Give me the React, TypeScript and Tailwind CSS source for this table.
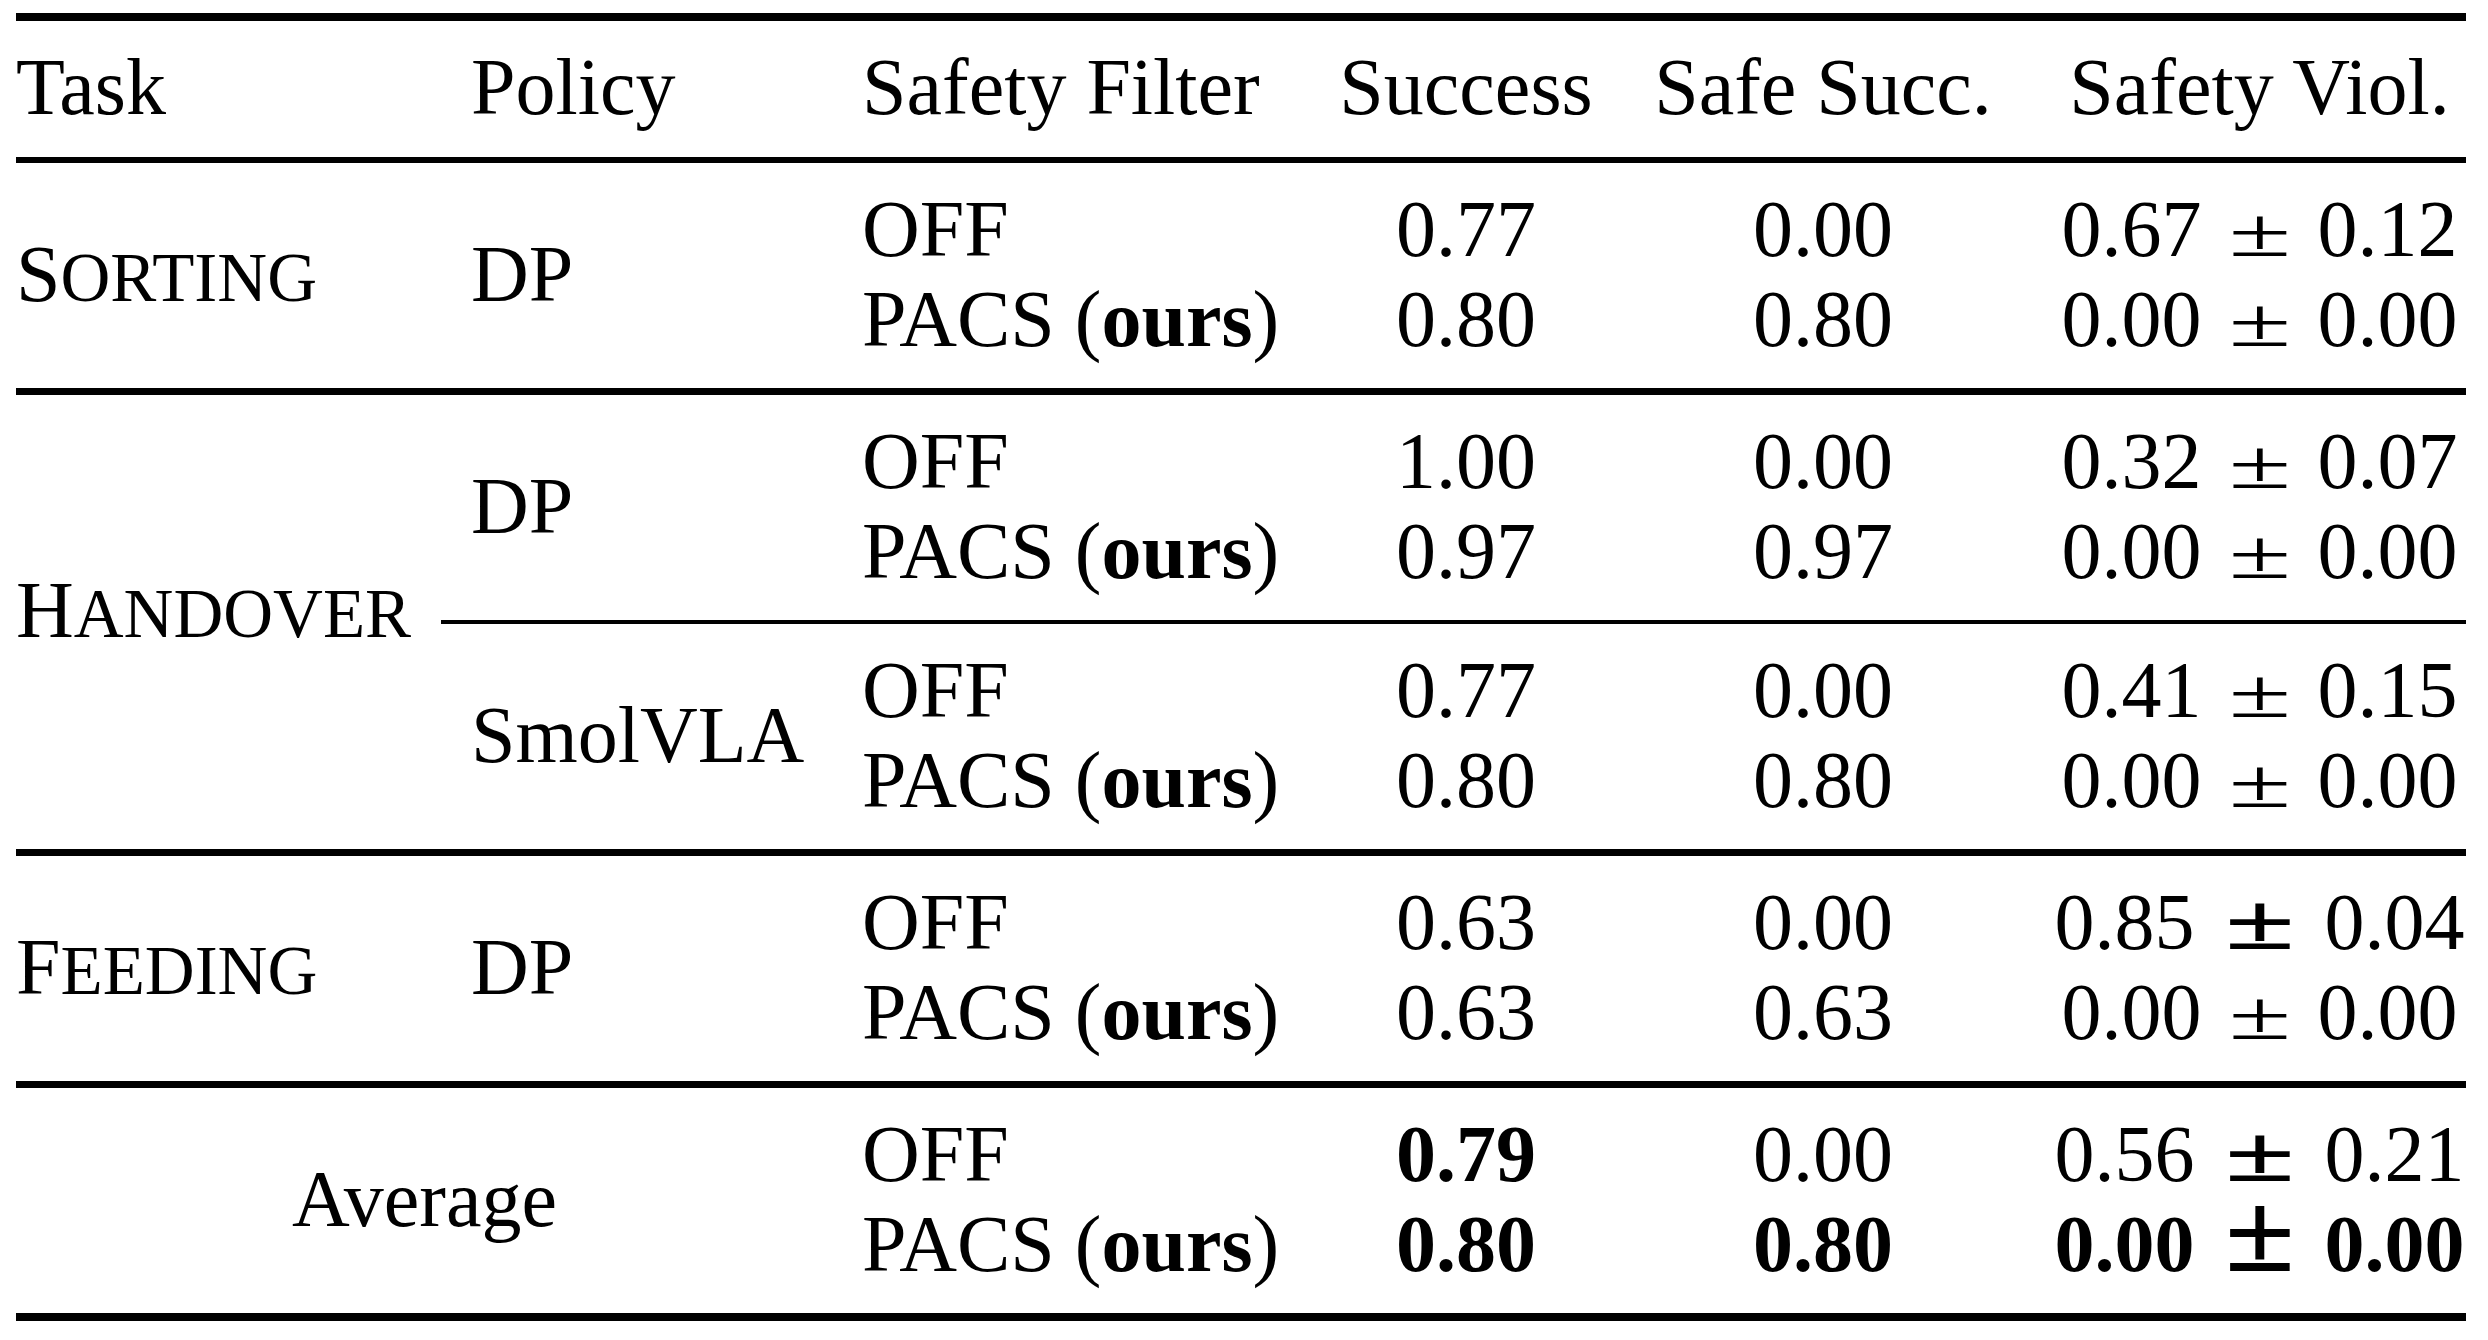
import React from "react";

const COLS = "grid grid-cols-[455px_391px_477px_254px_460px_413px] grid-rows-[90px_90px] pt-[21px] pb-[24px]";
const SUBCOLS = "grid grid-cols-[391px_477px_254px_460px_413px] grid-rows-[90px_90px] pl-[30px] pt-[21px] pb-[24px]";

function SC({ t }: { t: string }) {
  return (
    <span className="whitespace-nowrap">
      {t[0]}
      <span className="text-[69px] leading-none">{t.slice(1).toUpperCase()}</span>
    </span>
  );
}

function Pacs() {
  return (
    <span className="whitespace-nowrap">
      PACS (<span className="font-bold">ours</span>)
    </span>
  );
}

type Kind = "light" | "heavy" | "bold";

function PM({ a, b, k = "light" }: { a: string; b: string; k?: Kind }) {
  let pm: React.ReactNode;
  if (k === "bold") {
    pm = (
      <span className="mx-[43px] inline-block origin-[50%_72px] scale-x-[1.6] scale-y-[1.43] font-bold leading-[90px]">±</span>
    );
  } else if (k === "heavy") {
    pm = (
      <span className="mx-[43px] inline-block origin-[50%_72px] scale-x-[1.6] scale-y-[1.0] font-bold leading-[90px]">±</span>
    );
  } else {
    pm = (
      <span className="mx-[36px] inline-block origin-[50%_72px] scale-x-[1.42] scale-y-[0.88] leading-[90px]">±</span>
    );
  }
  return (
    <span className={k === "bold" ? "font-bold whitespace-nowrap" : "whitespace-nowrap"}>
      {a}
      {pm}
      {b}
    </span>
  );
}

type Row = { s: React.ReactNode; a: React.ReactNode; b: React.ReactNode; c: React.ReactNode };

function Cells({ rows }: { rows: Row[] }) {
  return (
    <>
      {rows.map((r, i) => (
        <React.Fragment key={i}>
          <div className="whitespace-nowrap">{r.s}</div>
          <div className="text-center">{r.a}</div>
          <div className="text-center">{r.b}</div>
          <div className="text-center">{r.c}</div>
        </React.Fragment>
      ))}
    </>
  );
}

function Rule({ h }: { h: string }) {
  return <div className={`${h} bg-black`} />;
}

export default function App() {
  return (
    <div className="min-h-screen w-[2488px] bg-white pt-[13px] text-black font-['Liberation_Serif','Times_New_Roman',serif] text-[80px] leading-[90px]">
      <div className="ml-[16px] w-[2450px]">
        <Rule h="h-[8px]" />
        {/* Header */}
        <div className="grid grid-cols-[455px_391px_477px_254px_460px_413px] pt-[21px] pb-[25px]">
          <div>Task</div>
          <div>Policy</div>
          <div className="whitespace-nowrap">Safety Filter</div>
          <div className="text-center whitespace-nowrap">Success</div>
          <div className="text-center whitespace-nowrap">Safe Succ.</div>
          <div className="text-center whitespace-nowrap">Safety Viol.</div>
        </div>
        <Rule h="h-[6px]" />
        {/* Sorting */}
        <div className={COLS}>
          <div className="row-span-2 self-center">
            <SC t="Sorting" />
          </div>
          <div className="row-span-2 self-center">DP</div>
          <Cells
            rows={[
              { s: "OFF", a: "0.77", b: "0.00", c: <PM a="0.67" b="0.12" /> },
              { s: <Pacs />, a: "0.80", b: "0.80", c: <PM a="0.00" b="0.00" /> },
            ]}
          />
        </div>
        <Rule h="h-[7px]" />
        {/* Handover */}
        <div className="flex">
          <div className="w-[425px] shrink-0 pt-[170px]">
            <SC t="Handover" />
          </div>
          <div className="w-[2025px] shrink-0">
            <div className={SUBCOLS}>
              <div className="row-span-2 self-center">DP</div>
              <Cells
                rows={[
                  { s: "OFF", a: "1.00", b: "0.00", c: <PM a="0.32" b="0.07" /> },
                  { s: <Pacs />, a: "0.97", b: "0.97", c: <PM a="0.00" b="0.00" /> },
                ]}
              />
            </div>
            <Rule h="h-[4px]" />
            <div className={SUBCOLS}>
              <div className="row-span-2 self-center">SmolVLA</div>
              <Cells
                rows={[
                  { s: "OFF", a: "0.77", b: "0.00", c: <PM a="0.41" b="0.15" /> },
                  { s: <Pacs />, a: "0.80", b: "0.80", c: <PM a="0.00" b="0.00" /> },
                ]}
              />
            </div>
          </div>
        </div>
        <Rule h="h-[7px]" />
        {/* Feeding */}
        <div className={COLS}>
          <div className="row-span-2 self-center">
            <SC t="Feeding" />
          </div>
          <div className="row-span-2 self-center">DP</div>
          <Cells
            rows={[
              { s: "OFF", a: "0.63", b: "0.00", c: <PM a="0.85" b="0.04" k="heavy" /> },
              { s: <Pacs />, a: "0.63", b: "0.63", c: <PM a="0.00" b="0.00" /> },
            ]}
          />
        </div>
        <Rule h="h-[7px]" />
        {/* Average */}
        <div className={COLS}>
          <div className="col-span-2 row-span-2 self-center pr-[29px] text-center">Average</div>
          <Cells
            rows={[
              {
                s: "OFF",
                a: <span className="font-bold">0.79</span>,
                b: "0.00",
                c: <PM a="0.56" b="0.21" k="heavy" />,
              },
              {
                s: <Pacs />,
                a: <span className="font-bold">0.80</span>,
                b: <span className="font-bold">0.80</span>,
                c: <PM a="0.00" b="0.00" k="bold" />,
              },
            ]}
          />
        </div>
        <Rule h="h-[8px]" />
      </div>
    </div>
  );
}
